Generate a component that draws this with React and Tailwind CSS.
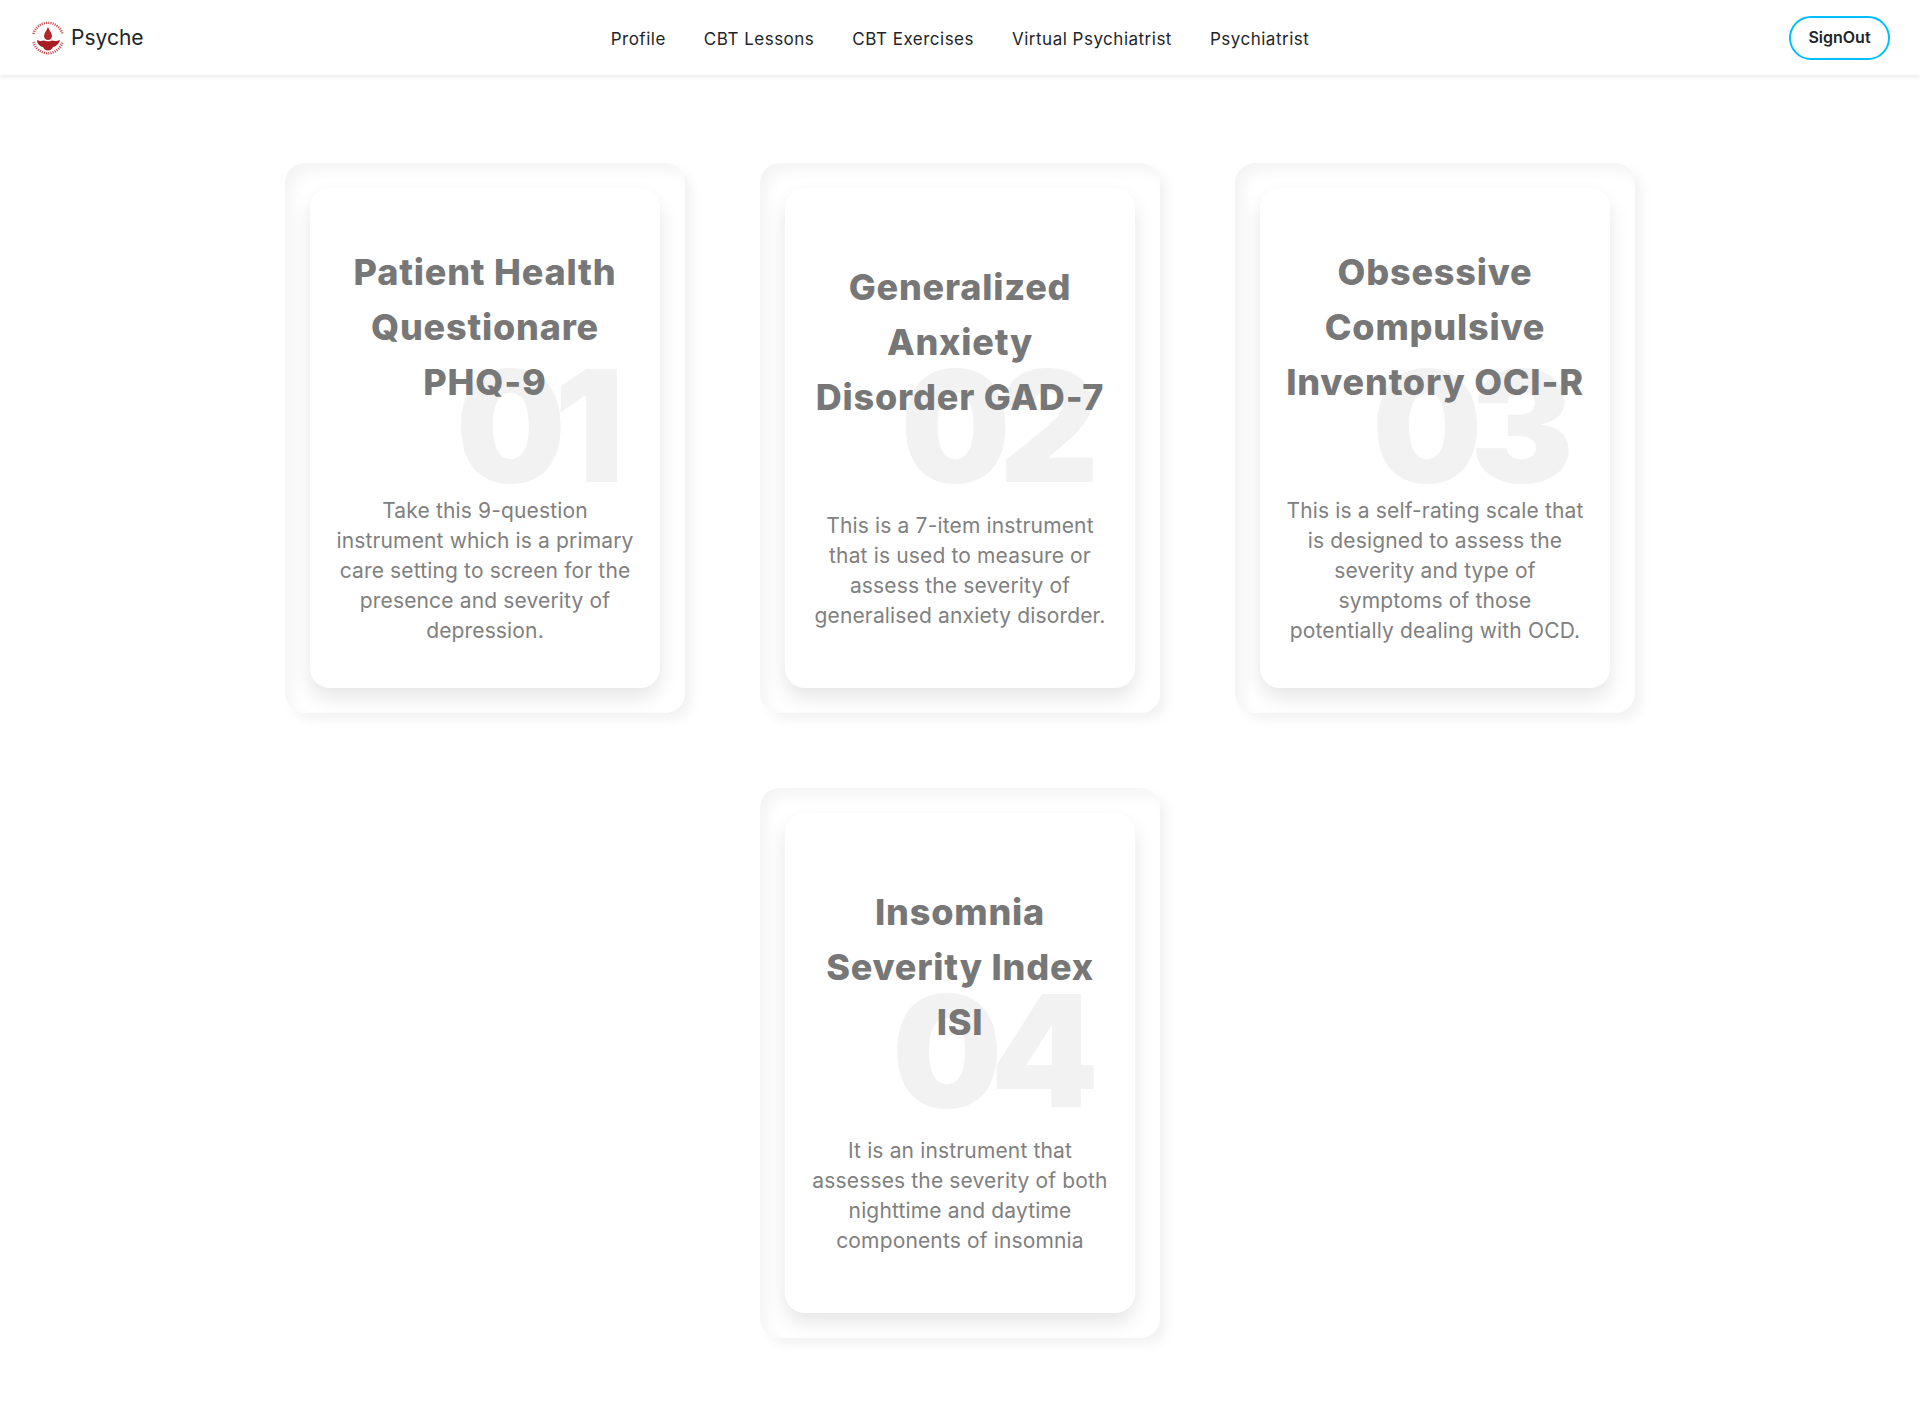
const tests = [
  {
    num: '01',
    title: ['Patient Health', 'Questionare', 'PHQ-9'],
    text: ['Take this 9-question', 'instrument which is a primary', 'care setting to screen for the', 'presence and severity of', 'depression.'],
  },
  {
    num: '02',
    title: ['Generalized', 'Anxiety', 'Disorder GAD-7'],
    text: ['This is a 7-item instrument', 'that is used to measure or', 'assess the severity of', 'generalised anxiety disorder.'],
  },
  {
    num: '03',
    title: ['Obsessive', 'Compulsive', 'Inventory OCI-R'],
    text: ['This is a self-rating scale that', 'is designed to assess the', 'severity and type of', 'symptoms of those', 'potentially dealing with OCD.'],
  },
  {
    num: '04',
    title: ['Insomnia', 'Severity Index', 'ISI'],
    text: ['It is an instrument that', 'assesses the severity of both', 'nighttime and daytime', 'components of insomnia'],
  },
];

const links = ['Profile', 'CBT Lessons', 'CBT Exercises', 'Virtual Psychiatrist', 'Psychiatrist'];

function Logo() {
  return (
    <svg width="36" height="36" viewBox="0 0 36 36" fill="none">
      <path d="M3.500 14A15 15 0 0 1 32.500 14" stroke="#c4585c" strokeWidth="2.500" strokeDasharray="1.200 1" />
      <path d="M3.500 22A15 15 0 0 0 32.500 22" stroke="#c4585c" strokeWidth="2.500" strokeDasharray="1.200 1" />
      <path d="M18 7C17 10 14 13 14 16C14 18.500 16 20 18 20C20 20 22 18.500 22 16C22 13 19 10 18 7Z" fill="#b2282c" />
      <path d="M7 20C10 21.500 12 21 14 20.500C15.500 21.500 20.500 21.500 22 20.500C24 21 26 21.500 30 20C29 24 26 26.500 23 27C22 29.500 20 30.500 18 30.500C16 30.500 14 29.500 13 27C10 26.500 7 24 7 20Z" fill="#a81e22" />
    </svg>
  );
}

function TestCard({ test }) {
  return (
    <div className="relative h-[550px] w-[400px] rounded-[20px] p-[25px] shadow-[inset_8px_8px_14px_rgba(0,0,0,0.045),inset_-5px_-5px_5px_rgba(255,255,255,0.5),7px_7px_12px_rgba(0,0,0,0.05),-5px_-5px_5px_rgba(255,255,255,0.5)]">
      <div className="relative flex h-full flex-col items-center justify-center rounded-[20px] bg-white px-5 pt-[15px] text-center shadow-[0_10px_20px_rgba(0,0,0,0.1)]">
        <div className="absolute right-[48px] top-[160px] text-[155px] font-black leading-[155px] tracking-[-12px] text-[#f2f2f2]">{test.num}</div>
        <h3 className="relative mb-[86px] whitespace-nowrap text-[36px] font-extrabold leading-[55px] tracking-[0.8px] text-[#777777]">
          {test.title.map((line) => <div key={line}>{line}</div>)}
        </h3>
        <p className="relative whitespace-nowrap text-[21px] font-normal leading-[30px] tracking-[0.15px] text-[#808080]">
          {test.text.map((line) => <span key={line} className="block">{line}</span>)}
        </p>
      </div>
    </div>
  );
}

export default function App() {
  return (
    <div className="min-h-[1425px] bg-white font-['Inter',sans-serif]">
      <nav className="grid h-[75px] grid-cols-[1fr_auto_1fr] items-center bg-white px-[30px] shadow-[0_2px_4px_rgba(0,0,0,0.08)]">
        <div className="flex items-center gap-[5px]">
          <Logo />
          <span className="text-[21px] text-[#212529]">Psyche</span>
        </div>
        <div className="flex gap-[38px] pt-[4px] text-[17px] tracking-[0.5px] text-[#212529]">
          {links.map((link) => <a key={link} href="#">{link}</a>)}
        </div>
        <div className="flex justify-end">
          <button className="h-[44px] w-[101px] rounded-full border-2 border-[#00bfff] pb-[2px] text-[16px] font-semibold text-[#212529]">SignOut</button>
        </div>
      </nav>
      <main className="flex flex-wrap justify-center gap-[75px] px-[285px] pt-[88px]">
        {tests.map((test) => <TestCard key={test.num} test={test} />)}
      </main>
    </div>
  );
}
